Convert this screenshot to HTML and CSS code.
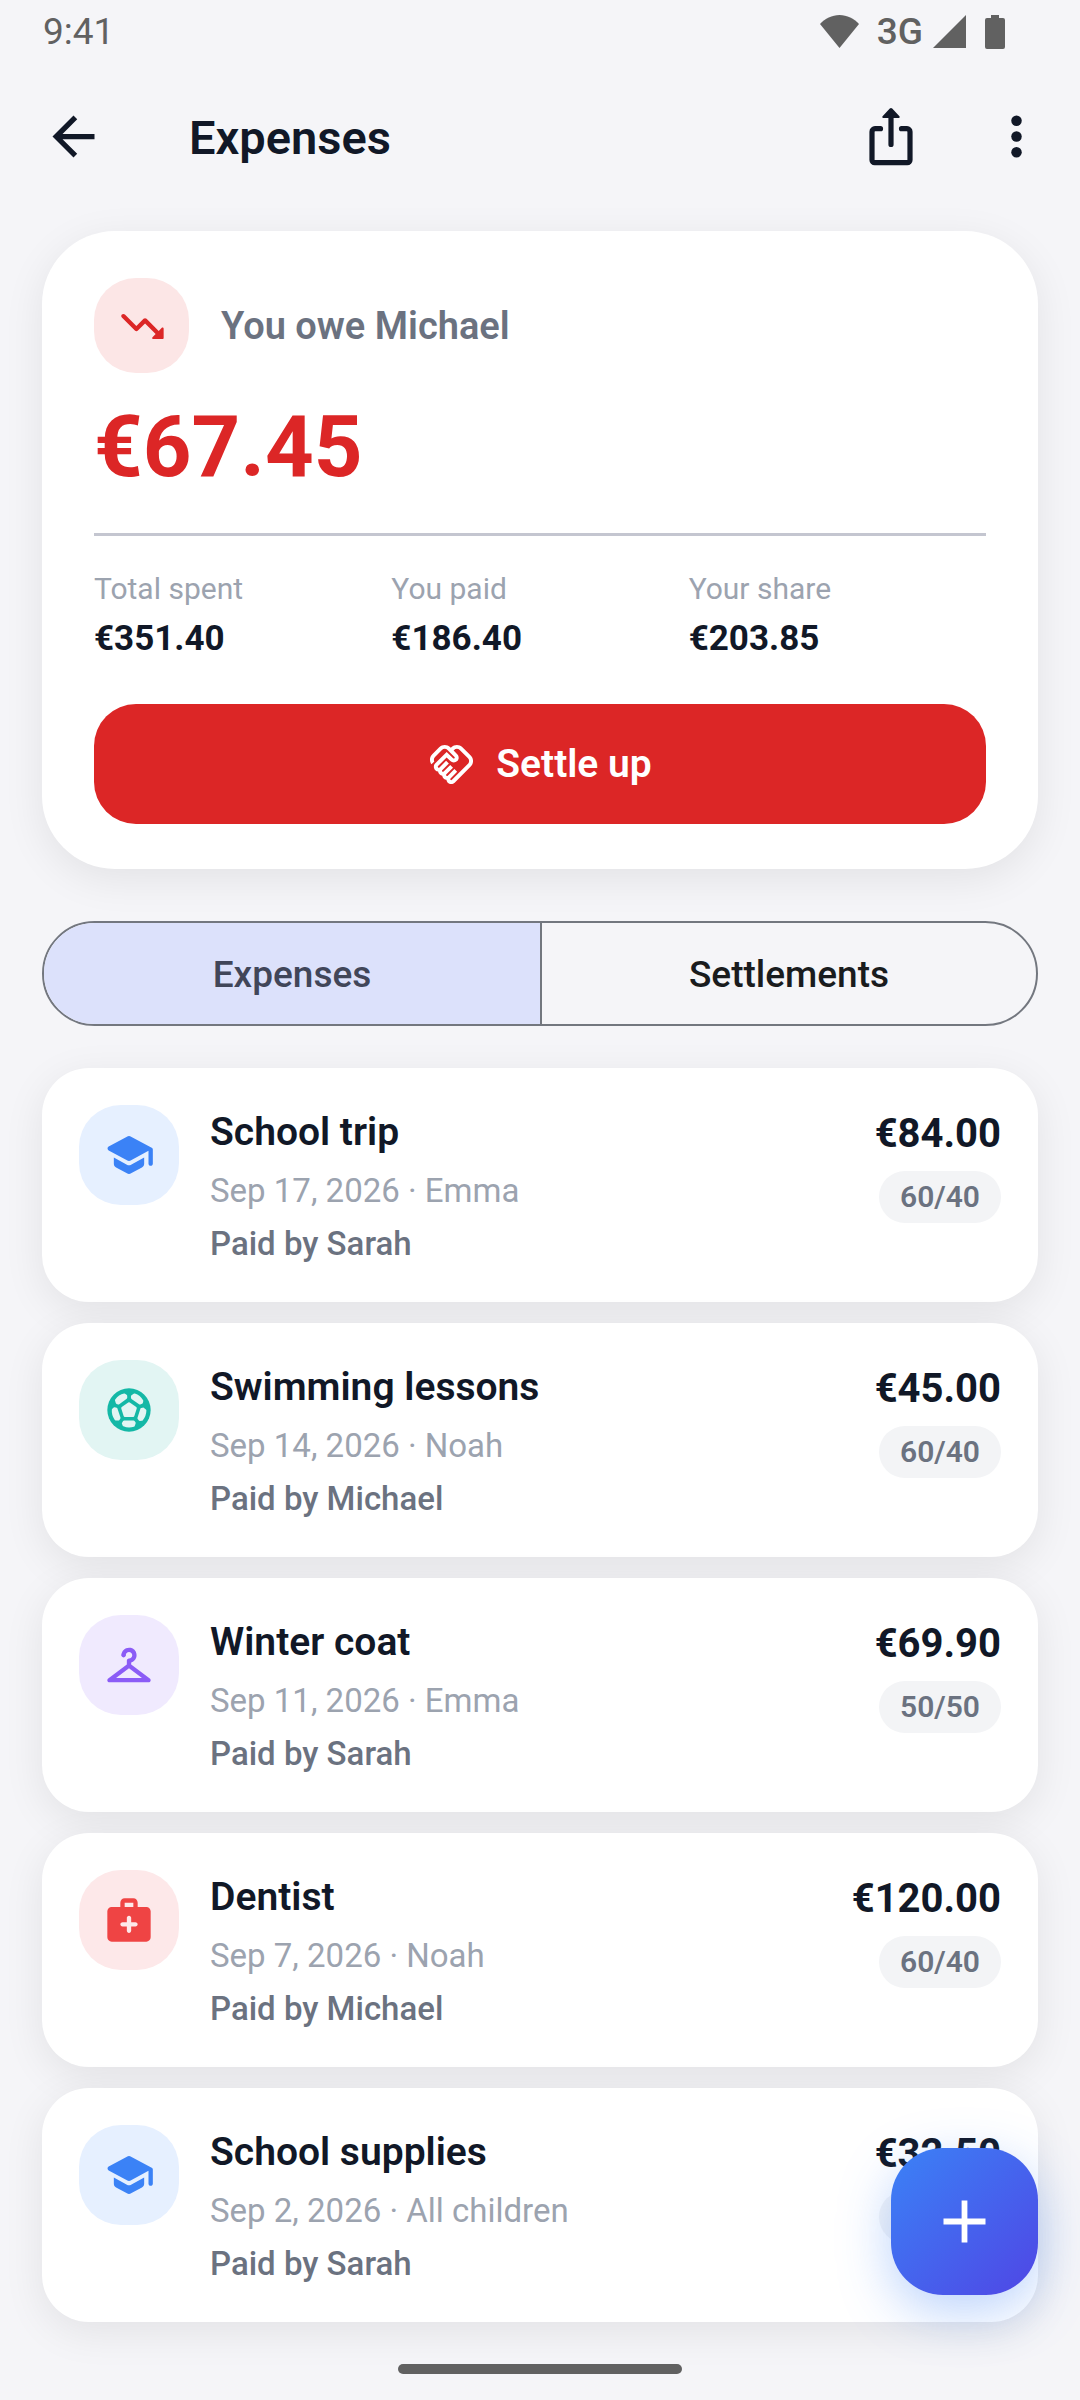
FILE: index.html
```html
<!DOCTYPE html>
<html lang="en">
<head>
<meta charset="utf-8">
<meta name="viewport" content="width=device-width, initial-scale=1">
<title>Expenses</title>
<link rel="stylesheet" href="styles.css">
</head>
<body>
<svg class="defs" aria-hidden="true">
  <symbol id="school" viewBox="0 0 24 24"><path d="M5 13.18v2.81c0 .73.4 1.41 1.04 1.76l5 2.73c.6.33 1.32.33 1.92 0l5-2.73c.64-.35 1.04-1.03 1.04-1.76v-2.81l-6.04 3.3c-.6.33-1.32.33-1.92 0L5 13.18zm6.04-9.66l-8.43 4.6c-.69.38-.69 1.38 0 1.76l8.43 4.6c.6.33 1.32.33 1.92 0L21 10.09V16c0 .55.45 1 1 1s1-.45 1-1V9.59c0-.37-.2-.7-.52-.88l-9.52-5.19c-.6-.32-1.32-.32-1.92 0z"/></symbol>
</svg>

<div class="status">
  <span class="clock">9:41</span>
  <div class="signals">
    <svg class="wifi" viewBox="0 0 39 33"><path d="M19.500 33L0 9C5 3.500 12 0 19.500 0S34 3.500 39 9z"/></svg>
    <span class="network">3G</span>
    <svg class="cell" viewBox="0 0 33 33"><path d="M33 0V33H0z"/></svg>
    <svg class="battery" viewBox="0 0 20 34"><path d="M6 0h8v3h4a2 2 0 0 1 2 2v27a2 2 0 0 1-2 2H2a2 2 0 0 1-2-2V5a2 2 0 0 1 2-2h4z"/></svg>
  </div>
</div>

<header class="bar">
  <button class="icon-button" aria-label="Back"><svg class="icon-lg" viewBox="0 0 24 24"><path d="M20 11H7.830l5.590-5.590L12 4l-8 8 8 8 1.410-1.410L7.830 13H20v-2z"/></svg></button>
  <h1 class="bar-title">Expenses</h1>
  <button class="icon-button" aria-label="Share"><svg class="icon-share" viewBox="0 0 44 58"><path class="line" d="M11.500 20.700H6a3 3 0 0 0-3 3V52a2.700 2.700 0 0 0 2.700 2.700h32.600A2.700 2.700 0 0 0 41 52V23.700a3 3 0 0 0-3-3h-5.500M22 8v28.500"/><path d="M20.800.6a1.700 1.700 0 0 1 2.400 0l7 7.400c1 1 .4 2-.8 2H14.600c-1.200 0-1.800-1-.8-2z"/></svg></button>
  <button class="icon-button" aria-label="More options"><svg class="icon-lg" viewBox="0 0 24 24"><circle cx="12" cy="6" r="2"/><circle cx="12" cy="12" r="2"/><circle cx="12" cy="18" r="2"/></svg></button>
</header>

<main class="content">
  <section class="balance">
    <div class="balance-head">
      <span class="tile tile-owe"><svg class="icon" viewBox="0 0 24 24"><path d="M16.850 17.150l1.440-1.440-4.880-4.880-3.290 3.290c-.39.39-1.020.39-1.410 0l-6-6.010c-.39-.39-.39-1.020 0-1.410.39-.39 1.020-.39 1.410 0L9.410 12l3.290-3.290c.39-.39 1.020-.39 1.410 0l5.590 5.580 1.440-1.440c.31-.31.85-.09.85.35v4.290c0 .28-.22.5-.5.5h-4.290c-.44.01-.66-.53-.35-.84z"/></svg></span>
      <h2 class="balance-title">You owe Michael</h2>
    </div>
    <p class="balance-amount">€67.45</p>
    <dl class="stats">
      <div><dt>Total spent</dt><dd>€351.40</dd></div>
      <div><dt>You paid</dt><dd>€186.40</dd></div>
      <div><dt>Your share</dt><dd>€203.85</dd></div>
    </dl>
    <button class="settle">
      <svg class="icon-sm" viewBox="0 0 24 24"><path d="M12.220 19.850c-.18.18-.5.21-.71 0-.18-.18-.21-.5 0-.71l3.390-3.390-1.410-1.410-3.390 3.390c-.19.2-.51.19-.71 0-.21-.21-.18-.53 0-.71l3.390-3.390-1.410-1.410-3.390 3.390c-.18.18-.5.21-.71 0-.19-.19-.19-.51 0-.71l3.390-3.390-1.420-1.410-3.390 3.390c-.18.18-.5.21-.71 0-.19-.2-.19-.51 0-.71L9.520 8.400l1.870 1.860c.95.95 2.590.94 3.540 0 .98-.98.98-2.560 0-3.540l-1.860-1.860.28-.28c.78-.78 2.050-.78 2.830 0l4.240 4.240c.78.78.78 2.050 0 2.830l-8.200 8.200zM21.830 13.070c1.560-1.560 1.560-4.090 0-5.660l-4.240-4.240c-1.560-1.560-4.090-1.560-5.660 0l-.28.28-.28-.28c-1.560-1.560-4.090-1.560-5.660 0L2.170 6.710C.75 8.130.62 10.340 1.770 11.900l1.450-1.450c-.39-.75-.26-1.700.37-2.330l3.540-3.540c.78-.78 2.050-.78 2.830 0l3.560 3.560c.18.18.21.5 0 .71-.21.21-.53.18-.71 0L9.520 5.570l-5.800 5.790c-.98.97-.98 2.560 0 3.540.39.39.89.63 1.420.7.07.52.3 1.020.7 1.420.4.4.9.63 1.420.7.07.52.3 1.020.7 1.420.4.4.9.63 1.420.7.07.54.31 1.030.7 1.420.47.47 1.100.73 1.770.73.67 0 1.300-.26 1.770-.73l8.210-8.190z"/></svg>
      <span>Settle up</span>
    </button>
  </section>

  <div class="segments" role="tablist">
    <button class="segment segment-on" role="tab" aria-selected="true">Expenses</button>
    <button class="segment" role="tab" aria-selected="false">Settlements</button>
  </div>

  <ul class="list">
    <li class="expense">
      <span class="tile tile-school"><svg class="icon"><use href="#school"/></svg></span>
      <div class="details"><h3 class="name">School trip</h3><p class="meta">Sep 17, 2026 · Emma</p><p class="payer">Paid by Sarah</p></div>
      <div class="cost"><span class="price">€84.00</span><span class="split">60/40</span></div>
    </li>
    <li class="expense">
      <span class="tile tile-sport"><svg class="icon" viewBox="0 0 24 24"><circle cx="12" cy="12" r="10"/><g class="ball-gap"><path id="gap" d="M13.500 5.700l1-.7q2.300.8 3.500 2.800l-.2.800-.8.300-3.500-2.500z"/><use href="#gap" transform="rotate(72 12 12)"/><use href="#gap" transform="rotate(144 12 12)"/><use href="#gap" transform="rotate(216 12 12)"/><use href="#gap" transform="rotate(288 12 12)"/><path d="M12 9l3 2.150L13.900 14.600h-3.800L9 11.150z"/></g></svg></span>
      <div class="details"><h3 class="name">Swimming lessons</h3><p class="meta">Sep 14, 2026 · Noah</p><p class="payer">Paid by Michael</p></div>
      <div class="cost"><span class="price">€45.00</span><span class="split">60/40</span></div>
    </li>
    <li class="expense">
      <span class="tile tile-clothes"><svg class="icon" viewBox="0 0 24 24"><circle cx="9.500" cy="7.500" r="1"/><path d="M21.600 18.200L13 11.750v-.91c1.650-.49 2.800-2.170 2.430-4.050-.26-1.310-1.300-2.400-2.610-2.700C10.540 3.570 8.500 5.300 8.500 7.500h2c0-.83.67-1.500 1.500-1.500s1.500.67 1.500 1.500c0 .84-.69 1.520-1.530 1.500-.54-.01-.97.45-.97.99v1.760L2.400 18.200c-.77.58-.36 1.800.6 1.800h18c.96 0 1.370-1.220.6-1.800zM6 18l6-4.500 6 4.500H6z"/></svg></span>
      <div class="details"><h3 class="name">Winter coat</h3><p class="meta">Sep 11, 2026 · Emma</p><p class="payer">Paid by Sarah</p></div>
      <div class="cost"><span class="price">€69.90</span><span class="split">50/50</span></div>
    </li>
    <li class="expense">
      <span class="tile tile-medical"><svg class="icon" viewBox="0 0 24 24"><path d="M20 6h-4V4c0-1.100-.9-2-2-2h-4c-1.100 0-2 .9-2 2v2H4c-1.100 0-2 .9-2 2v12c0 1.100.9 2 2 2h16c1.100 0 2-.9 2-2V8c0-1.100-.9-2-2-2zM10 4h4v2h-4V4zm5 11h-2v2c0 .55-.45 1-1 1s-1-.45-1-1v-2H9c-.55 0-1-.45-1-1s.45-1 1-1h2v-2c0-.55.45-1 1-1s1 .45 1 1v2h2c.55 0 1 .45 1 1s-.45 1-1 1z"/></svg></span>
      <div class="details"><h3 class="name">Dentist</h3><p class="meta">Sep 7, 2026 · Noah</p><p class="payer">Paid by Michael</p></div>
      <div class="cost"><span class="price">€120.00</span><span class="split">60/40</span></div>
    </li>
    <li class="expense">
      <span class="tile tile-school"><svg class="icon"><use href="#school"/></svg></span>
      <div class="details"><h3 class="name">School supplies</h3><p class="meta">Sep 2, 2026 · All children</p><p class="payer">Paid by Sarah</p></div>
      <div class="cost"><span class="price">€32.50</span><span class="split">60/40</span></div>
    </li>
  </ul>
</main>

<button class="fab" aria-label="Add expense"><svg class="icon-lg" viewBox="0 0 24 24"><path d="M20 13.100h-6.900V20h-2.200v-6.900H4v-2.200h6.900V4h2.200v6.900H20z"/></svg></button>
<div class="home-handle"></div>
</body>
</html>
```
FILE: styles.css
```css
* { box-sizing: border-box; }

body {
  margin: 0;
  min-height: 100vh;
  background: #f5f5f8;
  color: #111827;
  font-family: Roboto, "Noto Sans", sans-serif;
  font-size: 33px;
}

h1, h2, h3, p, dl, dd, ul { margin: 0; padding: 0; }
ul { list-style: none; }

button {
  padding: 0;
  border: 0;
  background: none;
  color: inherit;
  font: inherit;
  cursor: pointer;
}

svg { display: block; fill: currentColor; }

.defs { position: absolute; width: 0; height: 0; }

.icon { width: 52px; height: 52px; }
.icon-sm { width: 47px; height: 47px; }
.icon-lg { width: 63px; height: 63px; }
.icon-share { width: 44px; height: 58px; }

.line {
  fill: none;
  stroke: currentColor;
  stroke-width: 5.2;
  stroke-linecap: round;
}

/* Status bar */
.status {
  display: flex;
  justify-content: space-between;
  align-items: center;
  height: 63px;
  padding: 0 75px 0 43px;
  color: #616161;
  font-size: 37px;
  line-height: 63px;
}

.signals { display: flex; align-items: center; }
.wifi { width: 39px; height: 33px; margin-right: 18px; }
.network { font-weight: 500; }
.cell { width: 33px; height: 33px; margin: 0 19px 0 10px; }
.battery { width: 20px; height: 34px; }

/* App bar */
.bar {
  display: flex;
  align-items: center;
  height: 147px;
  padding: 0 32px 0 42px;
}

.bar-title {
  flex: 1;
  padding-top: 2px;
  margin-left: 84px;
  font-size: 47px;
  font-weight: 600;
  line-height: 56px;
}

.bar .icon-button + .icon-button { margin-left: 72px; }

.content { padding: 21px 42px 79px; }

/* Balance card */
.balance {
  padding: 47px 52px 45px;
  border-radius: 73px;
  background: #fff;
  box-shadow: 0 10px 42px rgba(0, 0, 0, 0.08);
}

.balance-head { display: flex; align-items: center; gap: 32px; }

.tile {
  display: grid;
  place-items: center;
  flex: none;
  width: 100px;
  height: 100px;
  border-radius: 42px;
}

.tile-owe { width: 95px; height: 95px; background: #fce6e6; color: #dc2626; }
.tile-school { background: #e6f0ff; color: #3b82f6; }
.tile-sport { background: #e2f5f3; color: #14b8a6; }
.tile-clothes { background: #f0eafe; color: #8b5cf6; }
.tile-medical { background: #fde8e9; color: #ef4444; }

.ball-gap {
  fill: #e2f5f3;
  stroke: #e2f5f3;
  stroke-width: 1.2;
  stroke-linejoin: round;
}

.balance-title {
  color: #6b7280;
  font-size: 38px;
  font-weight: 600;
  line-height: 44px;
}

.balance-amount {
  margin: 25px 0 37px;
  color: #dc2626;
  font-size: 85px;
  font-weight: 700;
  line-height: 98px;
}

.stats {
  display: grid;
  grid-template-columns: repeat(3, 1fr);
  padding: 36px 0 45px;
  border-top: 3px solid #c4c6d0;
}

.stats dt { color: #9ca3af; font-size: 30px; line-height: 34px; }
.stats dd { margin-top: 13px; font-size: 35px; font-weight: 700; line-height: 40px; }

.settle {
  display: flex;
  justify-content: center;
  align-items: center;
  gap: 21px;
  width: 100%;
  height: 120px;
  border-radius: 42px;
  background: #dc2626;
  color: #fff;
  font-size: 39px;
  font-weight: 600;
}

/* Segmented switch */
.segments {
  display: grid;
  grid-template-columns: 1fr 1fr;
  height: 105px;
  margin: 52px 0 42px;
  overflow: hidden;
  border: 2px solid #73777f;
  border-radius: 53px;
}

.segment { padding-top: 2px; color: #1a1c1e; font-size: 37px; font-weight: 500; }
.segment-on { background: #dce1fb; color: #414659; }
.segment + .segment { border-left: 2px solid #73777f; }

/* Expense list */
.list { display: grid; gap: 21px; }

.expense {
  display: flex;
  align-items: flex-start;
  padding: 37px 37px 39px;
  border-radius: 47px;
  background: #fff;
  box-shadow: 0 10px 42px rgba(0, 0, 0, 0.08);
}

.details { flex: 1; margin-left: 31px; }
.name { padding-top: 4px; font-size: 39px; font-weight: 600; line-height: 46px; }
.meta { margin-top: 17px; color: #9ca3af; line-height: 38px; }
.payer { margin-top: 15px; color: #6b7280; font-weight: 500; line-height: 38px; }

.cost { display: flex; flex-direction: column; align-items: flex-end; }
.price { padding-top: 6px; font-size: 40px; font-weight: 700; line-height: 46px; }

.split {
  margin-top: 14px;
  padding: 0 21px;
  border-radius: 26px;
  background: #f3f4f6;
  color: #6b7280;
  font-size: 30px;
  font-weight: 600;
  line-height: 52px;
}

/* Floating button and home handle stay over the scrolled list */
.fab {
  position: fixed;
  right: 42px;
  bottom: 105px;
  display: grid;
  place-items: center;
  width: 147px;
  height: 147px;
  border-radius: 52px;
  background: linear-gradient(135deg, #3b82f6, #4f46e5);
  box-shadow: 0 16px 52px rgba(59, 130, 246, 0.35);
  color: #fff;
}

.home-handle {
  position: fixed;
  bottom: 26px;
  left: 50%;
  width: 284px;
  height: 10px;
  margin-left: -142px;
  border-radius: 5px;
  background: #616161;
}
```
